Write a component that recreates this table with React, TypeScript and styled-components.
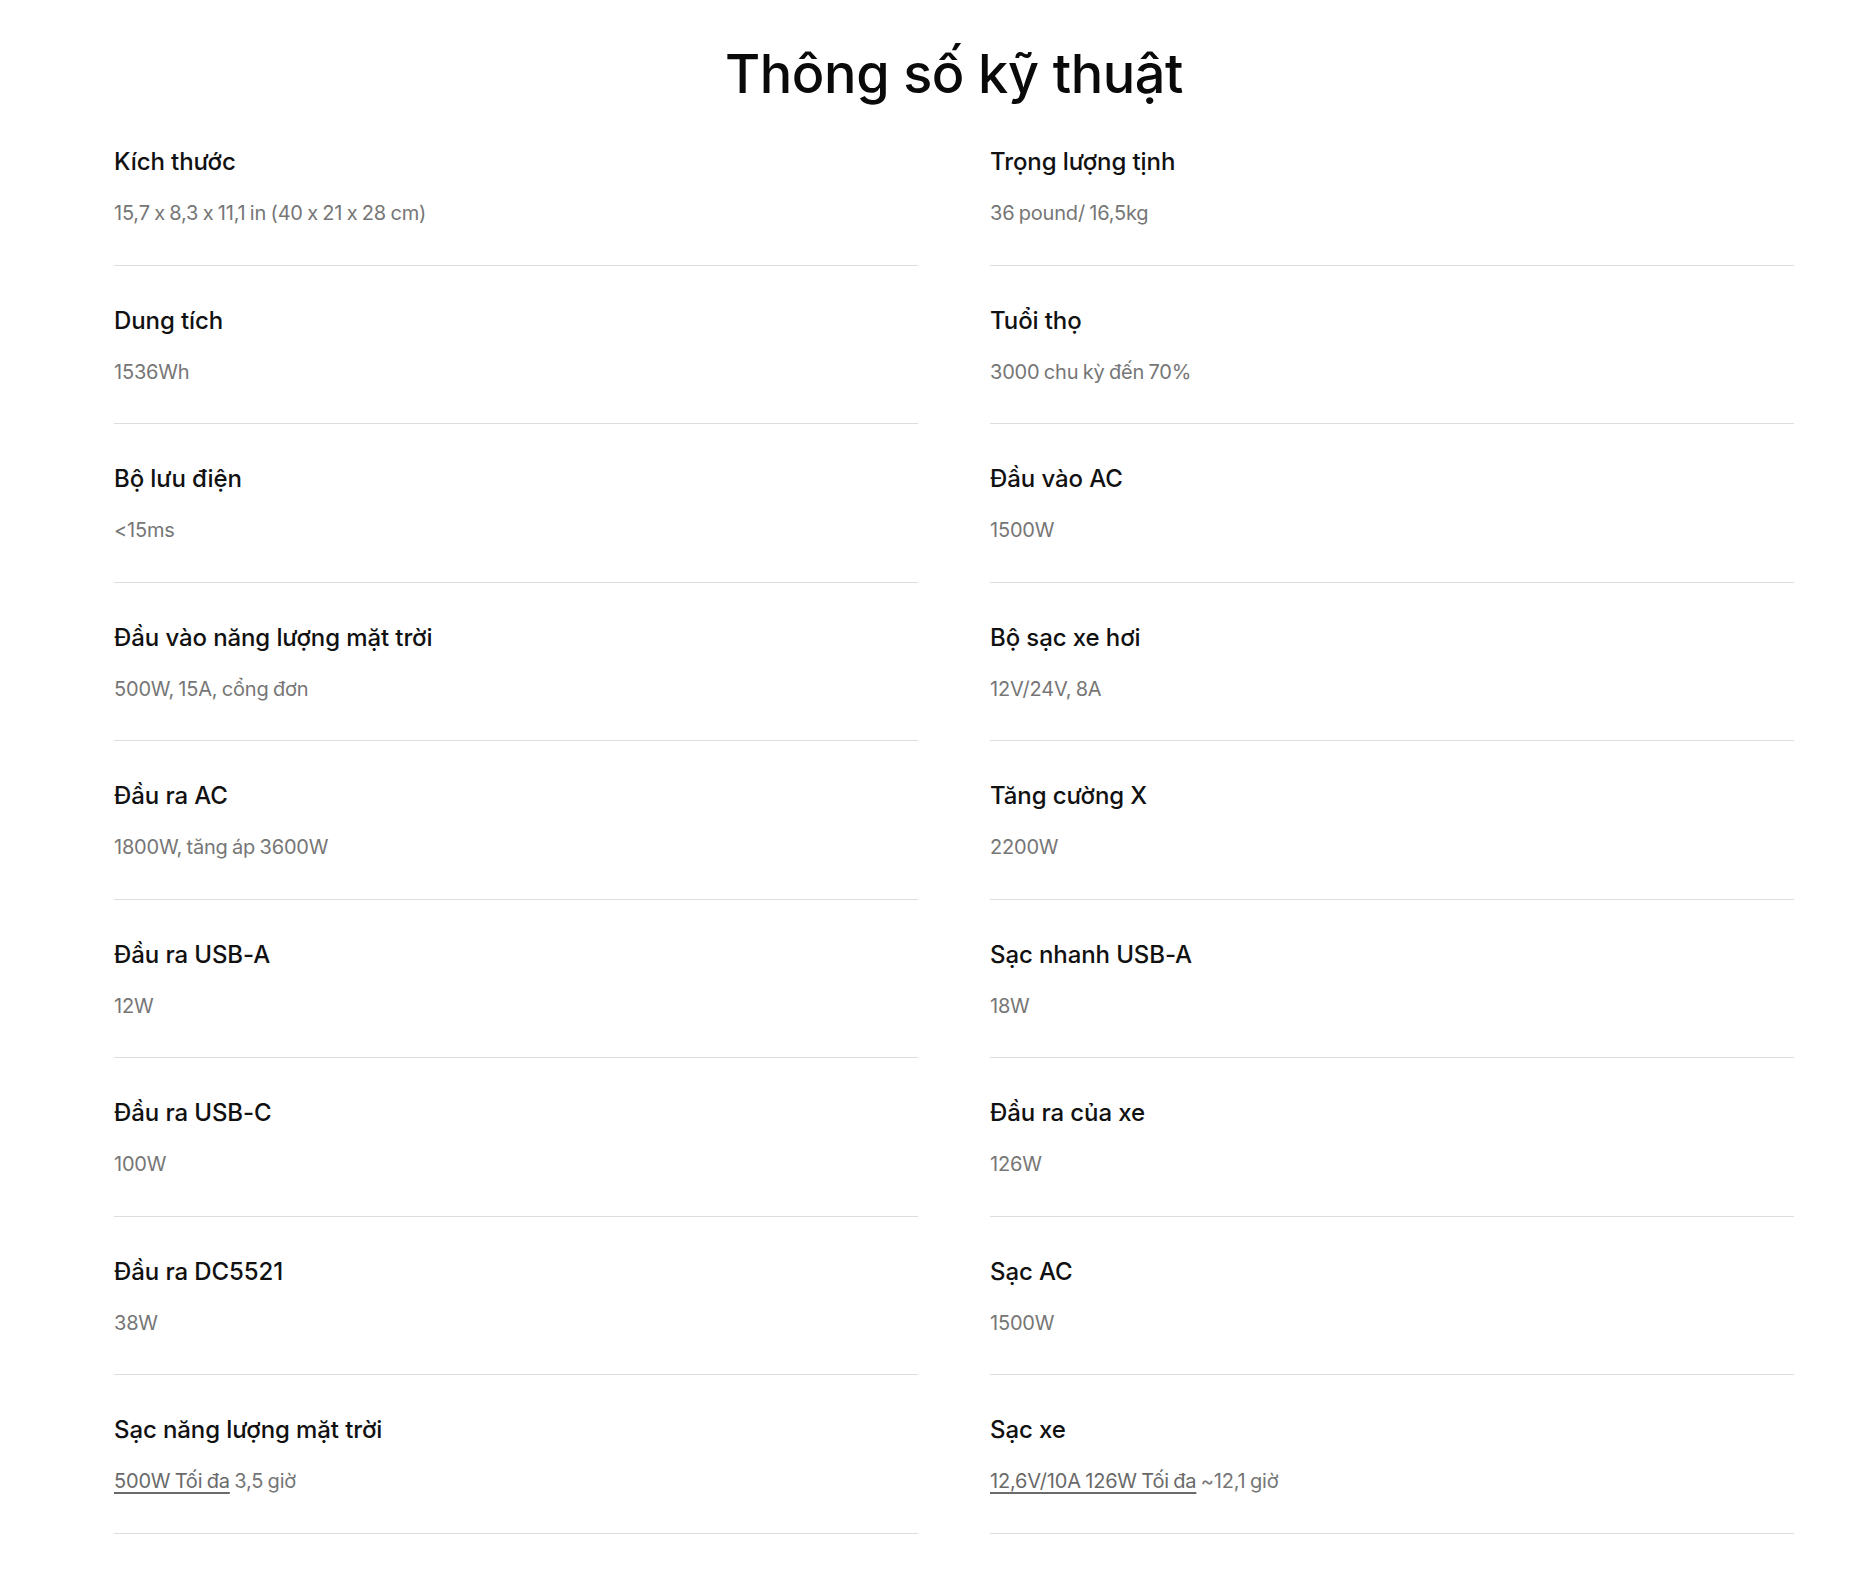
import React from "react";
import styled, { createGlobalStyle } from "styled-components";

const GlobalStyle = createGlobalStyle`
  html, body { margin: 0; padding: 0; background: #ffffff; }
  body { font-family: Inter, "Noto Sans", Roboto, sans-serif; color: #111; -webkit-font-smoothing: antialiased; }
`;

const Section = styled.section`
  padding: 0 76px 40px 114px;
`;

const Title = styled.h2`
  margin: 0;
  padding-top: 41px;
  height: 66px;
  text-align: center;
  font-size: 54px;
  line-height: 66px;
  font-weight: 500;
  letter-spacing: -0.4px;
  color: #0a0a0a;
`;

const Grid = styled.div`
  display: grid;
  grid-template-columns: 1fr 1fr;
  column-gap: 72px;
`;

const Item = styled.div`
  padding: 40px 0 36.5px;
  border-bottom: 1px solid #dedede;
  display: flex;
  flex-direction: column;
  gap: 21px;
`;

const Label = styled.div`
  font-size: 24px;
  line-height: 30px;
  font-weight: 500;
  color: #111;
  letter-spacing: -0.1px;
`;

const Value = styled.div`
  font-size: 20px;
  line-height: 30px;
  font-weight: 400;
  color: #767676;
  letter-spacing: -0.2px;
  word-spacing: -1px;
`;

const Link = styled.a`
  color: #6a6a6a;
  text-decoration: underline;
  text-underline-offset: 4px;
  text-decoration-thickness: 1.5px;
`;

type Spec = { label: string; value: React.ReactNode };

const specs: Spec[] = [
  { label: "Kích thước", value: "15,7 x 8,3 x 11,1 in (40 x 21 x 28 cm)" },
  { label: "Trọng lượng tịnh", value: "36 pound/ 16,5kg" },
  { label: "Dung tích", value: "1536Wh" },
  { label: "Tuổi thọ", value: "3000 chu kỳ đến 70%" },
  { label: "Bộ lưu điện", value: "<15ms" },
  { label: "Đầu vào AC", value: "1500W" },
  { label: "Đầu vào năng lượng mặt trời", value: "500W, 15A, cổng đơn" },
  { label: "Bộ sạc xe hơi", value: "12V/24V, 8A" },
  { label: "Đầu ra AC", value: "1800W, tăng áp 3600W" },
  { label: "Tăng cường X", value: "2200W" },
  { label: "Đầu ra USB-A", value: "12W" },
  { label: "Sạc nhanh USB-A", value: "18W" },
  { label: "Đầu ra USB-C", value: "100W" },
  { label: "Đầu ra của xe", value: "126W" },
  { label: "Đầu ra DC5521", value: "38W" },
  { label: "Sạc AC", value: "1500W" },
  {
    label: "Sạc năng lượng mặt trời",
    value: (
      <>
        <Link href="#">500W Tối đa</Link> 3,5 giờ
      </>
    ),
  },
  {
    label: "Sạc xe",
    value: (
      <>
        <Link href="#">12,6V/10A 126W Tối đa</Link> ~12,1 giờ
      </>
    ),
  },
];

export default function App() {
  return (
    <>
      <GlobalStyle />
      <Section>
        <Title>Thông số kỹ thuật</Title>
        <Grid>
          {specs.map((s, i) => (
            <Item key={i}>
              <Label>{s.label}</Label>
              <Value>{s.value}</Value>
            </Item>
          ))}
        </Grid>
      </Section>
    </>
  );
}
